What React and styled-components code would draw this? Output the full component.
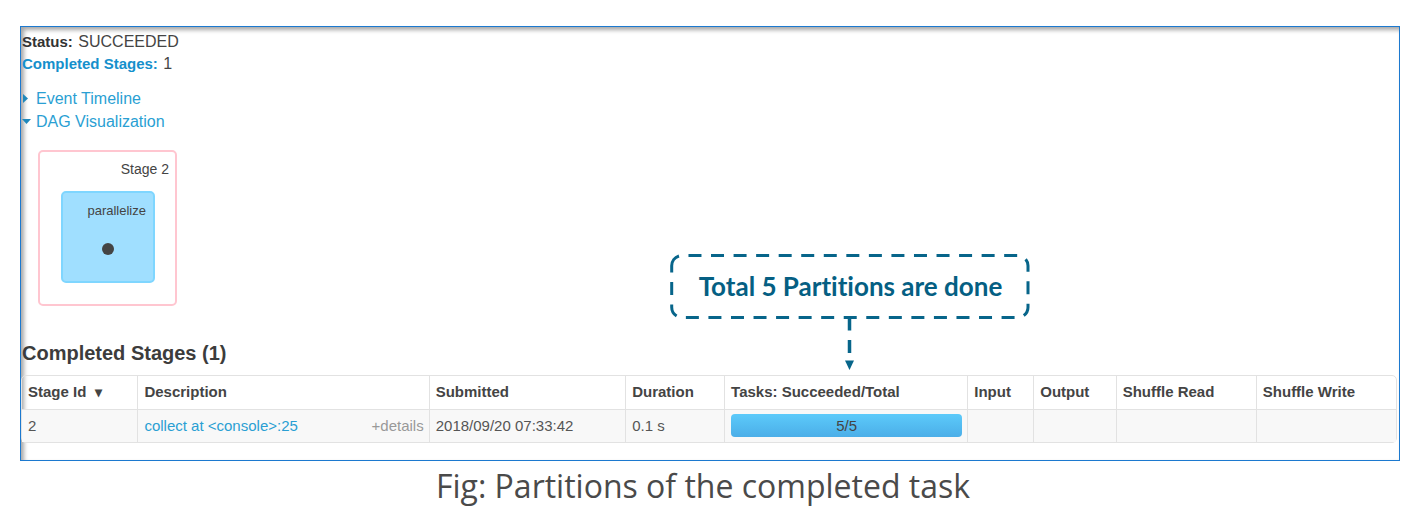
import React from "react";
import styled, { createGlobalStyle } from "styled-components";

const GlobalStyle = createGlobalStyle`
  *, *::before, *::after { box-sizing: border-box; }
  body {
    margin: 0;
    background: #fff;
    color: #444;
    font-family: "Liberation Sans", Arial, sans-serif;
    font-size: 15px;
    line-height: 23px;
  }
`;

const Figure = styled.figure`
  margin: 0;
  padding: 26px 18px 0 20px;
`;

const Frame = styled.div`
  border: 1px solid #1c79cf;
  box-shadow: inset 3px 3px 4px #00000059;
  padding: 4px 2px 17px 0;
`;

const Summary = styled.ul`
  list-style: none;
  margin: 0 0 12px;
  padding: 0 1px;
  font-size: 16px;
  line-height: 22px;
`;

const Link = styled.a`
  color: #2a9fd3;
  text-decoration: none;
`;

const Label = styled.strong`
  margin-right: 1px;
  font-size: 15px;
  color: ${(p) => (p.$link ? "#1590cc" : "#333")};
`;

const Toggle = styled.button`
  display: flex;
  align-items: center;
  gap: 5px;
  border: 0;
  margin: 0;
  padding: 0 1px;
  background: none;
  color: #2a9fd3;
  font: inherit;
  font-size: 16px;
  cursor: pointer;
`;

const Caret = styled.svg`
  width: 9px;
  height: 9px;
  fill: #2088bb;
`;

const Stage = styled.section`
  display: flex;
  flex-direction: column;
  width: 139px;
  height: 156px;
  margin: 17px 0 0 17px;
  padding: 6px 6px 0 21px;
  border: 2px solid #ffc6d0;
  border-radius: 5px;
  font-size: 14px;
  text-align: right;
`;

const Operation = styled.div`
  display: flex;
  flex-direction: column;
  width: 94px;
  height: 92px;
  margin-top: 10px;
  padding: 6px 7px;
  border: 2px solid #7fd6ff;
  border-radius: 5px;
  background: #a0dfff;
  font-size: 13px;
`;

const Dot = styled.span`
  width: 12px;
  height: 12px;
  margin: 21px auto 0 32px;
  border-radius: 50%;
  background: #444;
`;

const Results = styled.section`
  position: relative;
  margin-top: 35px;
`;

const Heading = styled.h2`
  margin: 0 0 10px;
  padding: 0 1px;
  font-size: 20px;
  line-height: 24px;
  color: #3c3c3c;
`;

const Table = styled.table`
  width: 100%;
  table-layout: fixed;
  border: 1px solid #e2e2e2;
  border-radius: 5px;
  border-collapse: separate;
  border-spacing: 0;
`;

const Col = styled.col`
  width: ${(p) => p.$w}%;
`;

const Th = styled.th`
  height: 33px;
  padding: 0 6px 2px;
  text-align: left;
  white-space: nowrap;
  & + & { border-left: 1px solid #e2e2e2; }
`;

const Td = styled.td`
  height: 33px;
  padding: 0 5px 2px 6px;
  border-top: 1px solid #e2e2e2;
  background: #f8f8f8;
  color: #555;
  white-space: nowrap;
  & + & { border-left: 1px solid #e2e2e2; }
`;

const Sort = styled.span`
  margin-left: 5px;
  font-size: 14px;
  line-height: 1;
`;

const Description = styled.div`
  display: flex;
  justify-content: space-between;
`;

const Details = styled.button`
  border: 0;
  padding: 0;
  background: none;
  color: #999;
  font: inherit;
  cursor: pointer;
`;

const Progress = styled.div`
  height: 23px;
  border-radius: 4px;
  background: linear-gradient(#5ccafa, #4baee8);
  color: #444;
  text-align: center;
`;

const Callout = styled.div`
  position: absolute;
  left: 47.2%;
  bottom: 71px;
  width: 360px;
  height: 118px;
  color: #055f83;
  font: 700 26px/64px Lato, sans-serif;
  font-variant-ligatures: none;
  text-align: center;
`;

const Outline = styled.svg`
  position: absolute;
  inset: 0;
  fill: none;
  stroke: #07658a;
  stroke-width: 3;
`;

const Caption = styled.figcaption`
  margin-top: 3px;
  padding-right: 14px;
  color: #4a4a4a;
  font: 32px/44px "Open Sans", sans-serif;
  text-align: center;
`;

const columns = [
  ["Stage Id", 8.4],
  ["Description", 21.2],
  ["Submitted", 14.3],
  ["Duration", 7.2],
  ["Tasks: Succeeded/Total", 17.7],
  ["Input", 4.8],
  ["Output", 6],
  ["Shuffle Read", 10.2],
  ["Shuffle Write", 10.2],
];

export default function App() {
  return (
    <>
      <GlobalStyle />
      <Figure>
        <Frame>
          <Summary>
            <li><Label>Status:</Label> SUCCEEDED</li>
            <li><Link href="#completed"><Label $link>Completed Stages:</Label></Link> 1</li>
          </Summary>
          <Toggle type="button" aria-expanded="false">
            <Caret viewBox="0 0 9 9"><path d="M1 0 6 4.500 1 9Z" /></Caret>
            Event Timeline
          </Toggle>
          <Toggle type="button" aria-expanded="true">
            <Caret viewBox="0 0 9 9"><path d="M0 2H9L4.500 7Z" /></Caret>
            DAG Visualization
          </Toggle>
          <Stage>
            Stage 2
            <Operation>
              parallelize
              <Dot />
            </Operation>
          </Stage>
          <Results>
            <Heading id="completed">Completed Stages (1)</Heading>
            <Table>
              <colgroup>
                {columns.map(([name, w]) => <Col key={name} $w={w} />)}
              </colgroup>
              <thead>
                <tr>
                  {columns.map(([name], i) => (
                    <Th key={name} scope="col">{name}{i === 0 && <Sort> ▾</Sort>}</Th>
                  ))}
                </tr>
              </thead>
              <tbody>
                <tr>
                  <Td>2</Td>
                  <Td>
                    <Description>
                      <Link href="#stage">collect at &lt;console&gt;:25</Link>
                      <Details type="button">+details</Details>
                    </Description>
                  </Td>
                  <Td>2018/09/20 07:33:42</Td>
                  <Td>0.1 s</Td>
                  <Td><Progress>5/5</Progress></Td>
                  <Td /><Td /><Td /><Td />
                </tr>
              </tbody>
            </Table>
            <Callout>
              <Outline viewBox="0 0 360 118" aria-hidden="true">
                <path
                  strokeDasharray="13 9.55"
                  d="M1.700 11.800A10.300 10.300 0 0 1 12 1.500H347.700A10.300 10.300 0 0 1 358 11.800V53.200A10.300 10.300 0 0 1 347.700 63.500H12A10.300 10.300 0 0 1 1.700 53.200Z"
                />
                <path strokeDasharray="13 9.55" strokeWidth="3.500" d="M179.500 63.500V100" />
                <path fill="#07658a" stroke="none" d="M175 106.500H184L179.500 116Z" />
              </Outline>
              Total 5 Partitions are done
            </Callout>
          </Results>
        </Frame>
        <Caption>Fig: Partitions of the completed task</Caption>
      </Figure>
    </>
  );
}
